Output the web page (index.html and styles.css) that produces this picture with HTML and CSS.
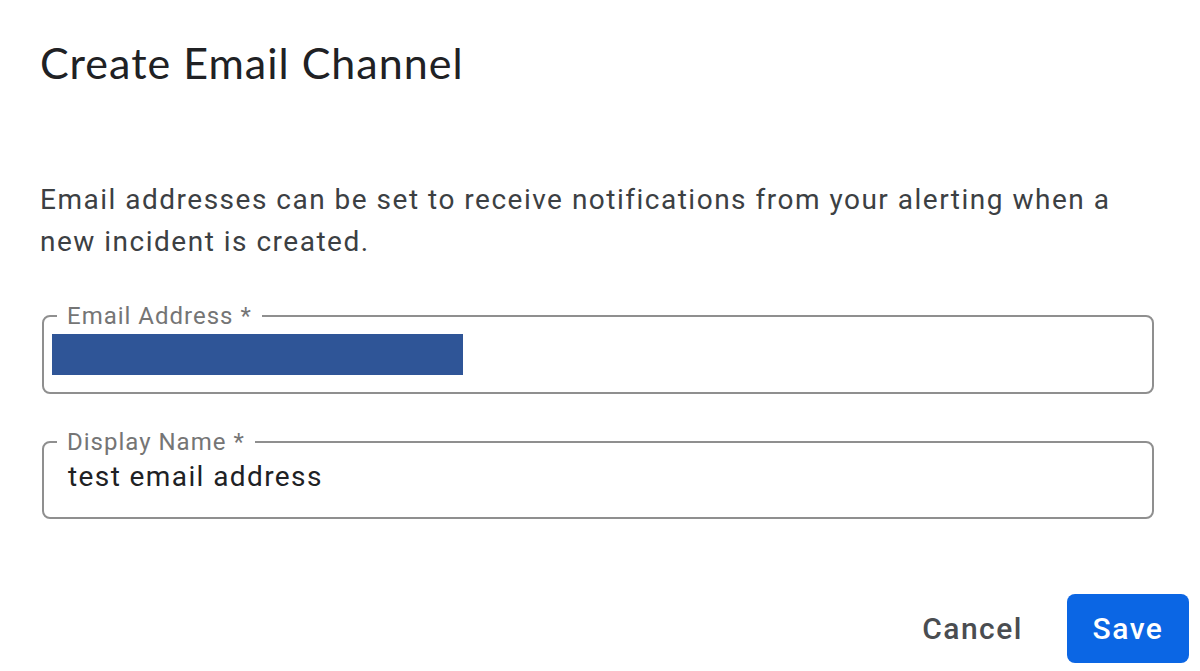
FILE: index.html
```html
<!DOCTYPE html>
<html lang="en">
<head>
  <meta charset="UTF-8">
  <meta name="viewport" content="width=device-width, initial-scale=1.0">
  <title>Create Email Channel</title>
  <link rel="stylesheet" href="styles.css">
</head>
<body>

<div class="dialog">
  <h1 class="dialog-title">Create Email Channel</h1>

  <div class="dialog-content">
    <p class="intro">Email addresses can be set to receive notifications from your alerting when a new incident is created.</p>

    <fieldset class="field">
      <legend>Email Address *</legend>
      <div class="field-value">
        <div class="redacted"></div>
      </div>
    </fieldset>

    <fieldset class="field">
      <legend>Display Name *</legend>
      <div class="field-value">test email address</div>
    </fieldset>
  </div>

  <div class="dialog-actions">
    <button class="btn btn-text">Cancel</button>
    <button class="btn btn-primary">Save</button>
  </div>
</div>

</body>
</html>
```

FILE: styles.css
```css
body {
  margin: 0;
  background-color: #fff;
  font-family: Roboto, "Liberation Sans", sans-serif;
  color: #202124;
}

.dialog {
  width: 1200px;
  height: 671px;
  overflow: hidden;
}

.dialog-title {
  margin: 0;
  padding: 37px 0 0 40px;
  font-family: Lato, "Open Sans", sans-serif;
  font-weight: 400;
  font-size: 43px;
  line-height: 52px;
  letter-spacing: 1px;
  color: #202124;
}

.dialog-content {
  padding: 0 46px 0 42px;
}

.intro {
  margin: 90px 0 0 -2px;
  font-size: 28px;
  line-height: 42px;
  letter-spacing: 1.5px;
  color: #3c4043;
}

.field {
  margin: 0;
  padding: 0;
  border: 2px solid #8f8f8f;
  border-radius: 8px;
}

.intro + .field {
  margin-top: 41px;
}

.field + .field {
  margin-top: 36px;
}

.field legend {
  margin-left: 13px;
  padding: 0 10px;
  font-size: 24px;
  line-height: 24px;
  letter-spacing: 1px;
  color: #757575;
}

.field-value {
  height: 46px;
  padding: 0 0 12px 24px;
  font-size: 28px;
  line-height: 46px;
  letter-spacing: 1.4px;
  color: #202124;
}

.field + .field .field-value {
  padding-bottom: 17px;
}

.redacted {
  width: 411px;
  height: 41px;
  margin: 6px 0 0 -16px;
  background-color: #2f5597;
}

.dialog-actions {
  display: flex;
  justify-content: flex-end;
  align-items: center;
  margin-top: 75px;
  padding-right: 11px;
  gap: 22px;
}

.btn {
  height: 69px;
  border: none;
  border-radius: 8px;
  font-family: Roboto, "Liberation Sans", sans-serif;
  font-size: 30px;
  font-weight: 500;
  letter-spacing: 1.5px;
  cursor: pointer;
}

.btn-text {
  padding: 0 22px;
  background: none;
  color: #4a4d51;
}

.btn-primary {
  width: 122px;
  padding: 0;
  background-color: #0b66e4;
  color: #fff;
}
```
